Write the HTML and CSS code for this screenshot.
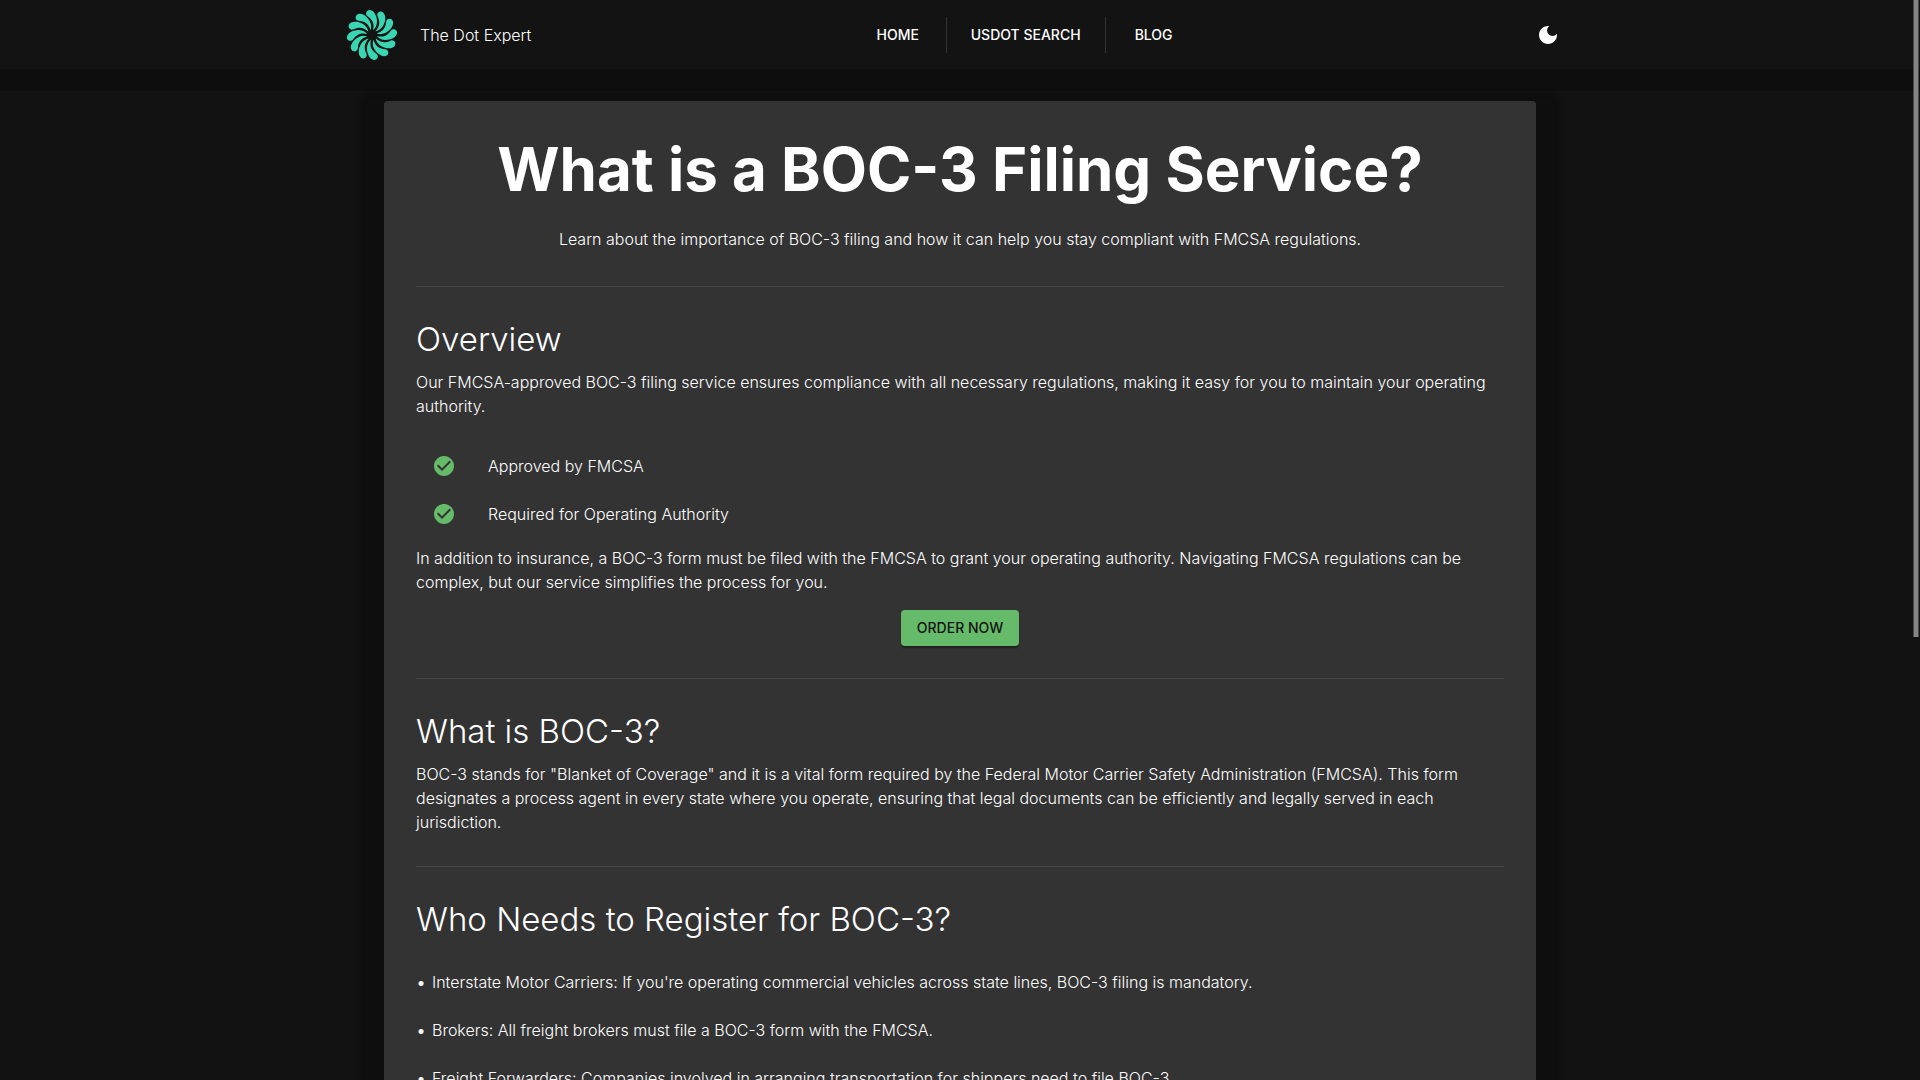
FILE: index.html
```
<!DOCTYPE html>
<html lang="en">
<head>
    <meta charset="UTF-8">
    <meta name="viewport" content="width=device-width, initial-scale=1.0">
    <title>BOC-3 Filing Service | The Dot Expert</title>
    <link rel="stylesheet" href="styles.css">
</head>
<body>
    <header class="header">
        <div class="toolbar">
            <a class="brand" href="#">
                <svg class="logo" viewBox="-29 -29 58 58" aria-hidden="true">
                    <defs>
                        <path id="blade" d="M5 1 C8 5 13 6 19 4.500 C23 3.200 25.500 1 26 -2 C26.300 -6 21.500 -7.500 19.500 -4.500 C16.500 0 12 3 5 1 Z"/>
                    </defs>
                    <use href="#blade"/>
                    <use href="#blade" transform="rotate(30)"/>
                    <use href="#blade" transform="rotate(60)"/>
                    <use href="#blade" transform="rotate(90)"/>
                    <use href="#blade" transform="rotate(120)"/>
                    <use href="#blade" transform="rotate(150)"/>
                    <use href="#blade" transform="rotate(180)"/>
                    <use href="#blade" transform="rotate(210)"/>
                    <use href="#blade" transform="rotate(240)"/>
                    <use href="#blade" transform="rotate(270)"/>
                    <use href="#blade" transform="rotate(300)"/>
                    <use href="#blade" transform="rotate(330)"/>
                </svg>
                <span>The Dot Expert</span>
            </a>
            <nav class="nav">
                <a href="#">Home</a>
                <a href="#">USDOT Search</a>
                <a href="#">Blog</a>
            </nav>
            <button class="theme-btn" aria-label="Toggle theme">
                <svg viewBox="0 0 24 24" aria-hidden="true"><path d="M12 3c-4.97 0-9 4.03-9 9s4.03 9 9 9 9-4.03 9-9c0-.46-.04-.92-.1-1.36-.98 1.37-2.58 2.26-4.4 2.26-2.98 0-5.4-2.42-5.4-5.4 0-1.81.89-3.42 2.26-4.4-.44-.06-.9-.1-1.36-.1z"/></svg>
            </button>
        </div>
    </header>

    <main class="card">
        <div class="intro">
            <h1>What is a BOC-3 Filing Service?</h1>
            <p>Learn about the importance of BOC-3 filing and how it can help you stay compliant with FMCSA regulations.</p>
        </div>

        <section>
            <h2>Overview</h2>
            <p>Our FMCSA-approved BOC-3 filing service ensures compliance with all necessary regulations, making it easy for you to maintain your operating authority.</p>
            <ul class="checks">
                <li>
                    <svg viewBox="0 0 24 24" aria-hidden="true"><path d="M12 2C6.48 2 2 6.48 2 12s4.48 10 10 10 10-4.48 10-10S17.52 2 12 2zm-2 15l-5-5 1.41-1.41L10 14.17l7.59-7.59L19 8l-9 9z"/></svg>
                    Approved by FMCSA
                </li>
                <li>
                    <svg viewBox="0 0 24 24" aria-hidden="true"><path d="M12 2C6.48 2 2 6.48 2 12s4.48 10 10 10 10-4.48 10-10S17.52 2 12 2zm-2 15l-5-5 1.41-1.41L10 14.17l7.59-7.59L19 8l-9 9z"/></svg>
                    Required for Operating Authority
                </li>
            </ul>
            <p>In addition to insurance, a BOC-3 form must be filed with the FMCSA to grant your operating authority. Navigating FMCSA regulations can be complex, but our service simplifies the process for you.</p>
            <button class="order-btn">Order Now</button>
        </section>

        <section>
            <h2>What is BOC-3?</h2>
            <p>BOC-3 stands for "Blanket of Coverage" and it is a vital form required by the Federal Motor Carrier Safety Administration (FMCSA). This form designates a process agent in every state where you operate, ensuring that legal documents can be efficiently and legally served in each jurisdiction.</p>
        </section>

        <section>
            <h2>Who Needs to Register for BOC-3?</h2>
            <ul class="needs">
                <li>Interstate Motor Carriers: If you're operating commercial vehicles across state lines, BOC-3 filing is mandatory.</li>
                <li>Brokers: All freight brokers must file a BOC-3 form with the FMCSA.</li>
                <li>Freight Forwarders: Companies involved in arranging transportation for shippers need to file BOC-3.</li>
            </ul>
        </section>
    </main>
</body>
</html>
```
FILE: styles.css
```
:root {
    --bg: #121212;
    --shadow: #0e0e0e;
    --card: #333333;
    --divider: #484848;
    --green: #66bb6a;
    --teal: #3ad6b4;
}

* {
    box-sizing: border-box;
    margin: 0;
    padding: 0;
}

html {
    scrollbar-width: none;
}

body {
    font-family: Inter, Roboto, sans-serif;
    font-size: 16px;
    font-weight: 340;
    line-height: 24px;
    background-color: var(--bg);
    color: #fff;
}

a {
    color: inherit;
    text-decoration: none;
}

button {
    border: none;
    font-family: inherit;
    cursor: pointer;
}

body::after {
    content: '';
    position: absolute;
    top: 0;
    right: 1px;
    width: 4px;
    height: 59vh;
    background-color: #858585;
    border: 1px solid #4a4a4a;
    border-width: 0 1px;
}

.header {
    background-color: #131313;
    box-shadow: 0 22px 0 var(--shadow);
}

.toolbar {
    max-width: 1280px;
    height: 69px;
    margin: 0 auto;
    padding: 0 24px;
    display: flex;
    justify-content: space-between;
    align-items: center;
}

.brand {
    display: flex;
    align-items: center;
    gap: 20px;
}

.logo {
    width: 56px;
    height: 56px;
    fill: var(--teal);
}

.nav {
    display: flex;
    gap: 33px;
}

.nav a {
    position: relative;
    min-width: 64px;
    padding: 6px 8px;
    font-size: 14px;
    font-weight: 500;
    text-align: center;
    text-transform: uppercase;
}

.nav a:not(:last-child)::after {
    content: '';
    position: absolute;
    top: 0;
    right: -17px;
    height: 100%;
    border-right: 1px solid #333;
}

.theme-btn {
    padding: 16px;
    background: none;
}

.theme-btn svg {
    display: block;
    width: 24px;
    height: 24px;
    fill: #fff;
}

.card {
    width: 60%;
    margin: 32px auto;
    padding: 32px;
    background-color: var(--card);
    border-radius: 4px;
    box-shadow: 0 16px 4px 24px var(--shadow);
}

.intro {
    padding-bottom: 3px;
    text-align: center;
}

h1 {
    margin-bottom: 22px;
    font-size: 60px;
    font-weight: 700;
    line-height: 72px;
}

h2 {
    margin-bottom: 11px;
    font-size: 33px;
    font-weight: 320;
    line-height: 40px;
}

section {
    margin-top: 32px;
    padding-top: 32px;
    border-top: 1px solid var(--divider);
}

ul {
    padding: 8px 0;
    list-style: none;
}

li {
    display: flex;
    min-height: 48px;
    padding: 12px 0;
}

.checks {
    margin-top: 16px;
}

.checks li {
    padding: 12px 16px;
    gap: 32px;
}

.checks svg {
    width: 24px;
    height: 24px;
    fill: var(--green);
}

.needs li::before {
    content: '•';
    width: 15px;
    padding-left: 1px;
    font-weight: 600;
}

.order-btn {
    display: block;
    margin: 16px auto 0;
    padding: 6px 16px;
    border-radius: 4px;
    background-color: var(--green);
    color: #131313;
    font-size: 14px;
    font-weight: 500;
    line-height: 24px;
    text-transform: uppercase;
    box-shadow: 0 2px 2px rgba(0, 0, 0, 0.4);
}
```
